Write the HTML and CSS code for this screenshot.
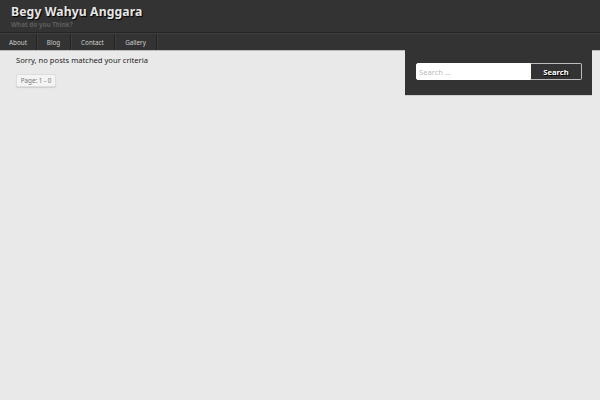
FILE: index.html
```html
<!DOCTYPE html>
<html>
<head>
<meta charset="utf-8">
<link rel="stylesheet" href="styles.css">
</head>
<body>
<header class="site-header">
  <div class="branding">
    <h1 class="site-title">Begy Wahyu Anggara</h1>
    <p class="site-desc">What do you Think?</p>
  </div>
  <nav class="nav">
    <a class="nav-item" href="#">About</a>
    <a class="nav-item" href="#">Blog</a>
    <a class="nav-item" href="#">Contact</a>
    <a class="nav-item" href="#">Gallery</a>
  </nav>
</header>
<div class="wrap">
  <main class="content">
    <p class="notice">Sorry, no posts matched your criteria</p>
    <span class="pager">Page: 1 - 0</span>
  </main>
  <aside class="sidebar">
    <form class="search">
      <input class="search-field" type="text" placeholder="Search ...">
      <button class="search-btn" type="button">Search</button>
    </form>
  </aside>
</div>
</body>
</html>
```
FILE: styles.css
```css
* { box-sizing: border-box; }
html, body { margin: 0; padding: 0; }
body {
  background: #e9e9e9;
  font-family: "Noto Sans", "Open Sans", sans-serif;
  color: #333;
  width: 600px;
  height: 400px;
  overflow: hidden;
}
.site-header {
  background: #333333;
}
.branding {
  height: 33px;
  padding: 3px 11px 0;
  border-bottom: 1px solid #262626;
}
.site-title {
  margin: 0;
  font-size: 12.2px;
  line-height: 18px;
  font-weight: 700;
  color: #e6e6e6;
  text-shadow: 1px 1px 1px #000;
  letter-spacing: 0.1px;
}
.site-desc {
  margin: 0;
  font-size: 6.3px;
  line-height: 7px;
  font-weight: 700;
  color: #5e5e5e;
}
.nav {
  display: flex;
  height: 18px;
  border-top: 1px solid #3e3e3e;
  border-bottom: 1px solid #bcbcbc;
}
.nav-item {
  display: flex;
  align-items: center;
  justify-content: center;
  height: 100%;
  font-size: 6.3px;
  color: #cfcfcf;
  text-decoration: none;
  border-right: 1px solid #232323;
  box-shadow: 1px 0 0 #3d3d3d;
}
.nav-item:nth-child(1) { width: 37px; }
.nav-item:nth-child(2) { width: 34px; }
.nav-item:nth-child(3) { width: 44px; }
.nav-item:nth-child(4) { width: 42px; }
.wrap {
  display: flex;
  justify-content: space-between;
  padding-left: 16px;
  padding-right: 8px;
}
.content {
  padding-top: 4px;
}
.notice {
  margin: 0;
  font-size: 7.6px;
  line-height: 11px;
  color: #1e1e1e;
}
.pager {
  display: inline-block;
  margin-top: 2px;
  width: 40px;
  height: 13px;
  line-height: 12px;
  text-align: center;
  font-size: 6.3px;
  color: #777;
  background: #f4f4f4;
  border: 1px solid #ddd;
  border-radius: 2px;
  box-shadow: 0 1px 1px rgba(0,0,0,0.12);
}
.sidebar {
  width: 187px;
  height: 45px;
  margin-top: -1px;
  background: #333333;
  padding: 13px 10px 0 11px;
  box-shadow: 0 1px 0 #d0d0d0;
}
.search {
  display: flex;
  height: 17px;
}
.search-field {
  width: 115px;
  height: 17px;
  margin: 0;
  padding: 0 2px;
  border: 1px solid #fff;
  border-radius: 2px 0 0 2px;
  background: #fff;
  font-family: "Noto Sans", "Open Sans", sans-serif;
  font-size: 7.6px;
  color: #333;
  outline: none;
}
.search-field::placeholder { color: #bbb; }
.search-btn {
  width: 51px;
  height: 17px;
  margin: 0;
  padding: 0;
  background: #333;
  border: 1px solid #bdbdbd;
  border-left: 0;
  border-radius: 0 2px 2px 0;
  color: #fff;
  font-family: "Noto Sans", "Open Sans", sans-serif;
  font-size: 7.6px;
  font-weight: 700;
  text-shadow: 1px 1px 0 #000;
}
```
